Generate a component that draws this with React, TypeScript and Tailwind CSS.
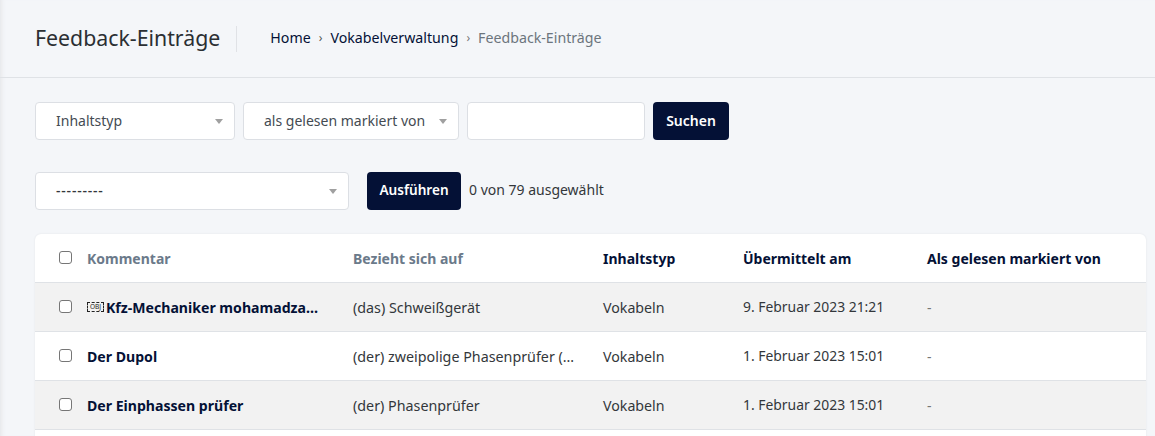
const rows = [
  { comment: 'Kfz-Mechaniker mohamadza…', obj: true, ref: '(das) Schweißgerät', type: 'Vokabeln', date: '9. Februar 2023 21:21', striped: true },
  { comment: 'Der Dupol', obj: false, ref: '(der) zweipolige Phasenprüfer (…', type: 'Vokabeln', date: '1. Februar 2023 15:01', striped: false },
  { comment: 'Der Einphassen prüfer', obj: false, ref: '(der) Phasenprüfer', type: 'Vokabeln', date: '1. Februar 2023 15:01', striped: true },
];

function Caret() {
  return <span className="h-0 w-0 border-x-[4px] border-t-[5px] border-x-transparent border-t-[#a0a0a0]" />;
}

function FakeSelect({ label, className }: { label: string; className: string }) {
  return (
    <div className={`flex h-[38px] items-center justify-between rounded border border-[#dcdfe4] bg-white pl-5 pr-[11px] text-[14px] text-[#444b52] ${className}`}>
      <span className="pb-px">{label}</span>
      <Caret />
    </div>
  );
}

function Check() {
  return <span className="block h-[13px] w-[13px] rounded-[3px] border border-[#767676] bg-white" />;
}

export default function App() {
  return (
    <div className="h-[436px] overflow-hidden bg-[#f4f6f9] font-['Noto_Sans',sans-serif] shadow-[inset_5px_0_5px_-4px_#e2e3e6]">
      <header className="flex h-[78px] items-center border-b border-[#dfe2e6] pl-[35px]">
        <h1 className="border-r border-[#e0e2e6] pr-4 text-[21.3px] leading-[26px] text-[#2b2f33]">
          <span className="relative -top-px">Feedback-Einträge</span>
        </h1>
        <nav className="ml-[33px] flex items-center pb-px text-[14.2px] text-[#041136]">
          <span>Home</span>
          <span className="mx-[8px] text-[12px] text-[#555]">›</span>
          <span>Vokabelverwaltung</span>
          <span className="mx-[8px] text-[12px] text-[#777]">›</span>
          <span className="text-[#6c757d]">Feedback-Einträge</span>
        </nav>
      </header>

      <div className="px-[35px] pt-6">
        <div className="flex gap-2">
          <FakeSelect label="Inhaltstyp" className="w-[200px]" />
          <FakeSelect label="als gelesen markiert von" className="w-[216px]" />
          <div className="h-[38px] w-[178px] rounded border border-[#dcdfe4] bg-white" />
          <button className="h-[38px] w-[76px] rounded bg-[#041136] pb-px text-[14px] font-semibold text-white">Suchen</button>
        </div>

        <div className="mt-8 flex items-center">
          <div className="flex h-[38px] w-[314px] items-center justify-between rounded border border-[#dcdfe4] bg-white pl-5 pr-[11px] text-[14px] font-medium tracking-[0.8px] text-[#33373b]">
            <span className="pb-px">---------</span>
            <Caret />
          </div>
          <button className="ml-[18px] h-[38px] w-[94px] rounded bg-[#041136] pb-px text-[13.6px] font-semibold text-white">Ausführen</button>
          <span className="ml-2 pb-[3px] text-[14px] text-[#33373b]">0 von 79 ausgewählt</span>
        </div>

        <div className="mt-6 w-[1111px] overflow-hidden rounded-md bg-white shadow-[0_0_2px_#dfe2e6]">
          <table className="w-full table-fixed border-collapse text-left text-[14px]">
            <colgroup>
              <col className="w-[52px]" />
              <col className="w-[266px]" />
              <col className="w-[250px]" />
              <col className="w-[140px]" />
              <col className="w-[184px]" />
              <col />
            </colgroup>
            <thead>
              <tr className="h-[48px] border-b border-[#dfe2e6] font-bold text-[#041136]">
                <th className="pl-6"><Check /></th>
                <th className="pt-[2px] text-[#6b7a8a]">Kommentar</th>
                <th className="pt-[2px] text-[#6b7a8a]">Bezieht sich auf</th>
                <th className="pt-[2px]">Inhaltstyp</th>
                <th className="pt-[2px]">Übermittelt am</th>
                <th className="pt-[2px]">Als gelesen markiert von</th>
              </tr>
            </thead>
            <tbody className="text-[#33373b]">
              {rows.map((row) => (
                <tr key={row.comment} className={`h-[49px] border-b border-[#dfe2e6] ${row.striped ? 'bg-[#f2f2f2]' : 'bg-white'}`}>
                  <td className="pl-6"><Check /></td>
                  <td className="pt-[2px] text-[14.1px] font-bold text-[#041136]">
                    <span className="flex items-center gap-[2px]">
                      {row.obj && (
                        <span className="w-[17px] border border-dashed border-[#222] text-center text-[6.5px] leading-[8px] font-normal text-[#222]">OBJ</span>
                      )}
                      {row.comment}
                    </span>
                  </td>
                  <td className="pt-[2px] text-[14.3px]">{row.ref}</td>
                  <td className="pt-[2px] text-[14.2px]">{row.type}</td>
                  <td className="pt-[2px] text-[13.9px]">{row.date}</td>
                  <td className="pt-[2px] text-[#777]">-</td>
                </tr>
              ))}
              <tr className="h-[49px]"><td colSpan={6} /></tr>
            </tbody>
          </table>
        </div>
      </div>
    </div>
  );
}
